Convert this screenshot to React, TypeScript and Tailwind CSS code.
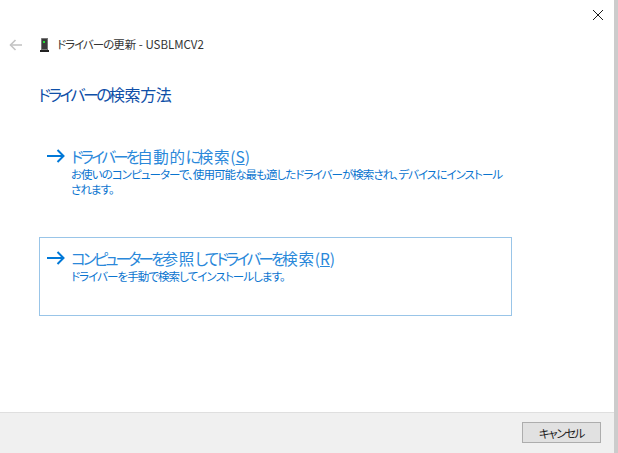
function Jp({ text, kana, other }: { text: string; kana: string; other: string }) {
  const parts = text.match(/[\u3040-\u30ff]+|[^\u3040-\u30ff]+/g) ?? [];
  return (
    <>
      {parts.map((p, i) => (
        <span key={i} className={/[\u3040-\u30ff]/.test(p) ? kana : other}>
          {p}
        </span>
      ))}
    </>
  );
}

function Arrow() {
  return (
    <svg width="18" height="14" viewBox="0 0 18 14" fill="none" stroke="#0078d7" strokeWidth="2" className="shrink-0 mt-[3px]">
      <path d="M0 7H16" />
      <path d="M10.5 1L16.5 7L10.5 13" />
    </svg>
  );
}

function Option({ title, hot, lines, boxed }: { title: string; hot: string; lines: string[]; boxed?: boolean }) {
  return (
    <div className={`flex items-start gap-[6px] w-[473px] h-[79px] pl-[7px] pr-[8px] pt-[10px] border ${boxed ? "border-[#99c5e8]" : "border-transparent"}`}>
      <Arrow />
      <div className="min-w-0">
        <div className="text-[15.5px] leading-[20px] text-[#2a88da] whitespace-nowrap">
          <Jp text={title} kana="tracking-[-2.85px]" other="tracking-[0.7px]" />
          <span>(</span>
          <span className="underline">{hot}</span>)
        </div>
        <div className="text-[11.5px] leading-[15px] mt-[1px] text-[#0a74cf] whitespace-nowrap tracking-[-0.93px]">
          {lines.map((l) => (
            <div key={l}>{l}</div>
          ))}
        </div>
      </div>
    </div>
  );
}

export default function App() {
  return (
    <div className="w-[618px] h-[453px] flex bg-white overflow-hidden font-['Noto_Sans_CJK_JP','Noto_Sans',sans-serif] [font-feature-settings:'palt']">
      <div className="w-[614px] h-full flex flex-col">
        <div className="h-[412px] flex flex-col relative">
          <div className="absolute top-[9px] right-[10px]">
            <svg width="12" height="12" viewBox="0 0 12 12" fill="none" stroke="#1a1a1a" strokeWidth="1">
              <path d="M1 1L11 11M11 1L1 11" />
            </svg>
          </div>
          <div className="flex items-center h-[20px] mt-[35px] pl-[9px]">
            <svg width="13" height="12" viewBox="0 0 13 12" fill="none" stroke="#c4c4c4" strokeWidth="1.6">
              <path d="M1 6H13" />
              <path d="M6.5 1L1.5 6L6.5 11" />
            </svg>
            <svg width="9" height="14" viewBox="0 0 9 14" className="ml-[18px]">
              <rect x="1" y="0" width="7" height="12" fill="#4a4a4a" />
              <rect x="1.5" y="0.5" width="6" height="11" fill="#3a3a3a" stroke="#9a9a9a" strokeWidth="0.6" />
              <rect x="3" y="3" width="2" height="2" fill="#22dd33" />
              <rect x="0" y="12" width="9" height="2" fill="#222222" />
            </svg>
            <span className="ml-[8px] text-[11.5px] text-[#333333] whitespace-nowrap">
              <Jp text="ドライバーの更新 - USBLMCV2" kana="tracking-[-1px]" other="tracking-[0px]" />
            </span>
          </div>
          <div className="ml-[38px] mt-[29px] text-[16px] leading-[20px] text-[#0f4fa8] whitespace-nowrap">
            <Jp text="ドライバーの検索方法" kana="tracking-[-2.6px]" other="tracking-[-0.4px]" />
          </div>
          <div className="ml-[39px] mt-[31px] flex flex-col gap-[23px]">
            <Option title="ドライバーを自動的に検索" hot="S" lines={["お使いのコンピューターで、使用可能な最も適したドライバーが検索され、デバイスにインストール", "されます。"]} />
            <Option boxed title="コンピューターを参照してドライバーを検索" hot="R" lines={["ドライバーを手動で検索してインストールします。"]} />
          </div>
        </div>
        <div className="flex-1 bg-[#f0f0f0] border-t border-[#dfdfdf] flex items-start justify-end pt-[9px] pr-[13px]">
          <button className="w-[79px] h-[21px] bg-[#e1e1e1] border border-[#adadad] text-[11.5px] leading-[18px] text-[#222222] tracking-[-1.4px]">キャンセル</button>
        </div>
      </div>
      <div className="w-[4px] h-full bg-[#cccccc]" />
    </div>
  );
}
